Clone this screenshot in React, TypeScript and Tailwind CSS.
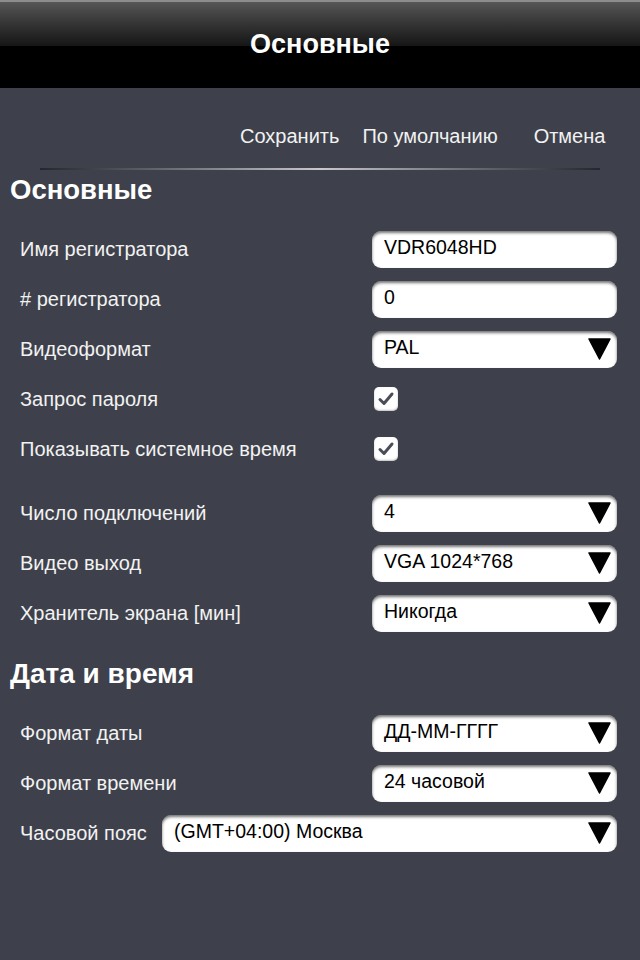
import React from "react";

const font = { fontFamily: '"Liberation Sans", Arial, sans-serif' };

function Arrow() {
  return (
    <svg width="23" height="22" viewBox="0 0 23 22" className="shrink-0">
      <path d="M1 1 L22 1 L11.5 21 Z" fill="#000" stroke="#000" strokeWidth="1.5" strokeLinejoin="round" />
    </svg>
  );
}

function Field({ value, select, wide }: { value: string; select?: boolean; wide?: boolean }) {
  return (
    <div
      className={`${wide ? "w-[455px]" : "w-[245px]"} h-[37px] bg-white rounded-[9px] shadow-[inset_0_2px_3px_rgba(0,0,0,0.55)] flex items-center pl-[12px] pr-[6px]`}
    >
      <span className="flex-1 text-[19.5px] text-black leading-none -mt-[2px]">{value}</span>
      {select && <Arrow />}
    </div>
  );
}

function Check() {
  return (
    <div className="ml-[2px] w-[24px] h-[24px] bg-white rounded-[5px] shadow-[inset_0_-1px_2px_rgba(0,0,0,0.25)] flex items-center justify-center">
      <svg width="18" height="18" viewBox="0 0 18 18">
        <path d="M3 9.5 L7 13.5 L15 4" fill="none" stroke="#4a4d57" strokeWidth="3" strokeLinecap="round" strokeLinejoin="round" />
      </svg>
    </div>
  );
}

function Row({ label, children }: { label: string; children: React.ReactNode }) {
  return (
    <div className="h-[50px] flex items-center pl-[20px] pr-[23px]">
      <span className="flex-1 text-[20px] text-[#f2f2f2]">{label}</span>
      <div className="w-[245px] flex">{children}</div>
    </div>
  );
}

export default function App() {
  return (
    <div style={font} className="w-[640px] h-[960px] bg-[#3e414b] flex flex-col">
      <div className="h-[88px] bg-black flex flex-col relative">
        <div className="h-[2px] bg-[#8c8c8c]" />
        <div className="h-[44px] bg-gradient-to-b from-[#565656] to-[#161616]" />
        <div className="absolute inset-0 flex items-center justify-center">
          <span className="text-white font-bold text-[27px]">Основные</span>
        </div>
      </div>

      <div className="pt-[36px] h-[60px] flex text-[20px] leading-[24px] text-[#f2f2f2]">
        <span className="ml-[240px]">Сохранить</span>
        <span className="ml-[23px]">По умолчанию</span>
        <span className="ml-[36px]">Отмена</span>
      </div>
      <div className="mt-[20px] mx-[40px] h-[2px] bg-gradient-to-r from-[#25272f] via-[#c9c9cc] to-[#25272f]" />

      <div className="mt-[5px] h-[30px] pl-[10px] flex items-center text-white font-bold text-[27.5px]">Основные</div>

      <div className="mt-[19px] flex flex-col">
        <Row label="Имя регистратора"><Field value="VDR6048HD" /></Row>
        <Row label="# регистратора"><Field value="0" /></Row>
        <Row label="Видеоформат"><Field value="PAL" select /></Row>
        <Row label="Запрос пароля"><Check /></Row>
        <Row label="Показывать системное время"><Check /></Row>
      </div>

      <div className="mt-[14px] flex flex-col">
        <Row label="Число подключений"><Field value="4" select /></Row>
        <Row label="Видео выход"><Field value="VGA 1024*768" select /></Row>
        <Row label="Хранитель экрана [мин]"><Field value="Никогда" select /></Row>
      </div>

      <div className="mt-[21px] h-[30px] pl-[10px] flex items-center text-white font-bold text-[28px]">Дата и время</div>

      <div className="mt-[19px] flex flex-col">
        <Row label="Формат даты"><Field value="ДД-ММ-ГГГГ" select /></Row>
        <Row label="Формат времени"><Field value="24 часовой" select /></Row>
        <div className="h-[50px] flex items-center pl-[20px] pr-[23px]">
          <span className="flex-1 text-[20px] text-[#f2f2f2]">Часовой пояс</span>
          <Field value="(GMT+04:00) Москва" select wide />
        </div>
      </div>
    </div>
  );
}
